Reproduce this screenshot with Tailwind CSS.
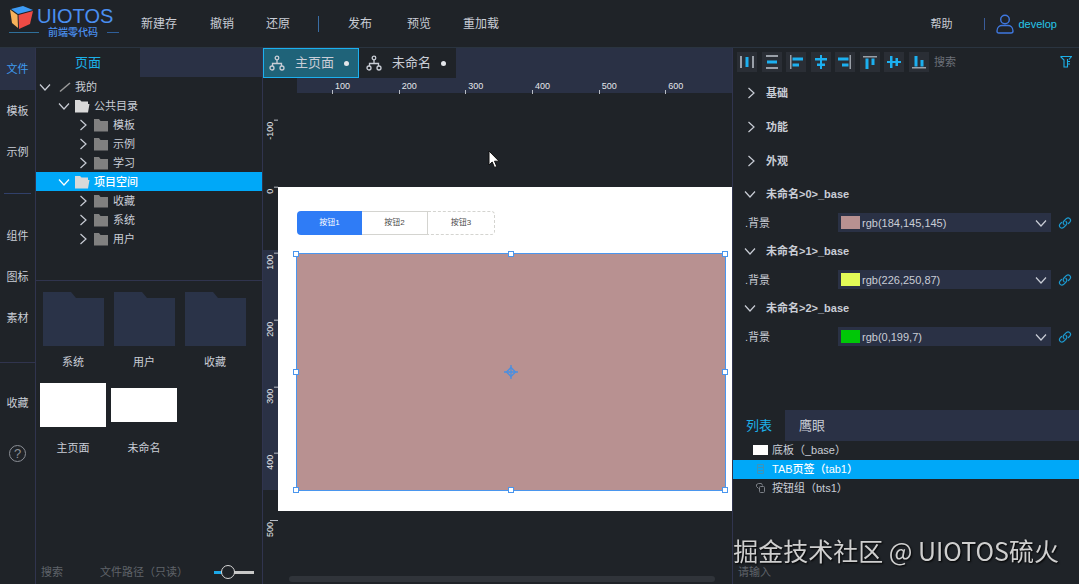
<!DOCTYPE html>
<html lang="zh-CN">
<head>
  <meta charset="UTF-8">
  <meta name="viewport" content="width=device-width, initial-scale=1.0">
  <title>UIOTOS 前端零代码</title>
  <script src="https://cdn.jsdelivr.net/npm/@tailwindcss/browser@4"></script>
</head>
<body class="bg-[#1f2328] text-[#c9cdd6] text-[11px] leading-4 font-['Liberation_Sans','Noto_Sans_CJK_SC',sans-serif] h-screen overflow-hidden flex flex-col">

  <!-- Icons -->
  <svg class="hidden">
    <symbol id="right" viewBox="0 0 12 12"><path d="M3.5 1 9 6 3.5 11" fill="none" stroke="currentColor" stroke-width="1.2"/></symbol>
    <symbol id="down" viewBox="0 0 12 12"><path d="M1 3.5 6 9 11 3.5" fill="none" stroke="currentColor" stroke-width="1.2"/></symbol>
    <symbol id="folder" viewBox="0 0 16 14"><path d="M1 1h5l1.5 2H15v10.500H1z" fill="currentColor"/></symbol>
    <symbol id="folder-open" viewBox="0 0 16 14"><path d="M1 1h5l1.500 1.500H14V5h1.500L14 13.500H1z" fill="currentColor"/></symbol>
    <symbol id="big-folder" viewBox="0 0 61 54"><path d="M0 0h28l5 6h28v48H0z" fill="currentColor"/></symbol>
    <symbol id="tree" viewBox="0 0 16 16"><g fill="none" stroke="currentColor" stroke-width="1.300"><circle cx="8" cy="3" r="1.800"/><path d="M8 5v3M3.500 11V8.500h9V11"/><circle cx="3" cy="13" r="2"/><circle cx="13" cy="13" r="2"/></g></symbol>
    <symbol id="link" viewBox="0 0 14 14"><g fill="none" stroke="currentColor" stroke-width="1.200" stroke-linecap="round"><path d="M6 8.500a2.500 2.500 0 0 1 0-3.500l2.500-2.600a2.500 2.500 0 0 1 3.500 3.500L10.500 7.500"/><path d="M8 5.500a2.500 2.500 0 0 1 0 3.500l-2.500 2.600A2.500 2.500 0 0 1 2 8.100L3.500 6.500"/></g></symbol>
  </svg>

  <!-- Header -->
  <header class="h-12 shrink-0 flex items-center border-b border-[#2a3440]">
    <div class="w-[141px] pl-[9px] pr-[22px] pb-1 text-[#4a8ff0]">
      <div class="flex h-[22px] items-center gap-1">
        <svg class="size-6 mt-1" viewBox="0 0 24 24">
          <path d="M2 3 14 0l10 4-15 4z" fill="#3d9bf5"/>
          <path d="M1 3.500 8.500 9 9 22 3 17z" fill="#f7b25a"/>
          <path d="M9.500 9 24 5l-3 13-11 5z" fill="#ee4b45"/>
        </svg>
        <span class="text-[20px] leading-[22px]">UIOTOS</span>
      </div>
      <div class="flex h-3 items-center justify-between">
        <span class="w-[30px] border-t border-[#2f6f9a]"></span>
        <span class="text-[10px] leading-3 font-medium">前端零代码</span>
        <span class="w-3 border-t border-[#2f5f9a]"></span>
      </div>
    </div>
    <nav class="flex items-center text-xs">
      <button class="w-[69px] text-left">新建存</button>
      <button class="w-14 text-left">撤销</button>
      <button class="w-[52px] text-left">还原</button>
      <span class="w-[30px] h-4 border-l border-[#3a6ea5]"></span>
      <button class="w-[59px] text-left">发布</button>
      <button class="w-14 text-left">预览</button>
      <button class="text-left">重加载</button>
    </nav>
    <div class="ml-auto flex items-center pr-[22px]">
      <button class="mr-8">帮助</button>
      <span class="h-3 w-3 border-l border-[#3a5c9a]"></span>
      <button class="flex items-center gap-1 text-[#26c6e8]">
        <svg class="w-[18px] h-5 text-[#3f78e0]" viewBox="0 0 18 20" fill="none" stroke="currentColor" stroke-width="1.400"><circle cx="9" cy="5.500" r="4.300"/><path d="M1 17c0-4 3-5.500 5-5.500h6c2 0 5 1.500 5 5.500 0 1.500-.5 2-2 2H3c-1.500 0-2-.5-2-2z"/></svg>
        develop
      </button>
    </div>
  </header>

  <div class="flex flex-1 min-h-0">
    <!-- Side nav -->
    <nav class="w-9 shrink-0 flex flex-col border-r border-[#30344e]">
      <button class="h-[42px] bg-[#2a3145] text-[#3f9cf0]">文件</button>
      <button class="h-[41px]">模板</button>
      <button class="h-[41px]">示例</button>
      <hr class="my-[21px] mx-1 border-[#31406a]">
      <button class="h-[41px]">组件</button>
      <button class="h-[41px]">图标</button>
      <button class="h-[41px]">素材</button>
      <hr class="mt-6 mb-[19px] border-[#30344e]">
      <button class="h-[41px]">收藏</button>
      <button class="mt-[22px] mx-auto size-[17px] rounded-full border border-[#8b8f96] text-[#8b8f96] text-[13px] leading-[15px]">?</button>
    </nav>

    <!-- Page explorer -->
    <aside class="w-[227px] shrink-0 flex flex-col border-r border-[#30344e]">
      <div class="flex h-[29px]">
        <button class="w-[104px] text-[13px] text-[#1cb0e8]">页面</button>
        <div class="flex-1 bg-[#2a3145]"></div>
      </div>
      <ul class="h-[204px] border-b border-[#30344e] [&>li]:h-[19px] [&>li]:flex [&>li]:items-center">
        <li class="pl-[3px]"><svg class="size-3 mr-2"><use href="#down"/></svg><svg class="w-3 h-3 mr-1 text-[#9a9a9a]" viewBox="0 0 12 12"><path d="M1 10.500 11 2" stroke="currentColor" stroke-width="1.500"/></svg>我的</li>
        <li class="pl-[22px]"><svg class="size-3 mr-1"><use href="#down"/></svg><svg class="w-4 h-[14px] mr-1 text-[#d9d9d9]"><use href="#folder-open"/></svg>公共目录</li>
        <li class="pl-[41px]"><svg class="size-3 mr-1"><use href="#right"/></svg><svg class="w-4 h-[14px] mr-1 text-[#808080]"><use href="#folder"/></svg>模板</li>
        <li class="pl-[41px]"><svg class="size-3 mr-1"><use href="#right"/></svg><svg class="w-4 h-[14px] mr-1 text-[#808080]"><use href="#folder"/></svg>示例</li>
        <li class="pl-[41px]"><svg class="size-3 mr-1"><use href="#right"/></svg><svg class="w-4 h-[14px] mr-1 text-[#808080]"><use href="#folder"/></svg>学习</li>
        <li class="pl-[22px] bg-[#00a8f8] text-white font-medium"><svg class="size-3 mr-1"><use href="#down"/></svg><svg class="w-4 h-[14px] mr-1 text-[#d9d9d9]"><use href="#folder-open"/></svg>项目空间</li>
        <li class="pl-[41px]"><svg class="size-3 mr-1"><use href="#right"/></svg><svg class="w-4 h-[14px] mr-1 text-[#808080]"><use href="#folder"/></svg>收藏</li>
        <li class="pl-[41px]"><svg class="size-3 mr-1"><use href="#right"/></svg><svg class="w-4 h-[14px] mr-1 text-[#808080]"><use href="#folder"/></svg>系统</li>
        <li class="pl-[41px]"><svg class="size-3 mr-1"><use href="#right"/></svg><svg class="w-4 h-[14px] mr-1 text-[#808080]"><use href="#folder"/></svg>用户</li>
      </ul>
      <div class="grid grid-cols-[66px_66px_66px] gap-x-[5px] gap-y-3 pl-1 pt-2 text-center">
        <figure><div class="h-[60px] flex items-center justify-center"><svg class="w-[61px] h-[54px] text-[#2a3348]"><use href="#big-folder"/></svg></div><figcaption class="mt-1 pt-[1px]">系统</figcaption></figure>
        <figure><div class="h-[60px] flex items-center justify-center"><svg class="w-[61px] h-[54px] text-[#2a3348]"><use href="#big-folder"/></svg></div><figcaption class="mt-1 pt-[1px]">用户</figcaption></figure>
        <figure><div class="h-[60px] flex items-center justify-center"><svg class="w-[61px] h-[54px] text-[#2a3348]"><use href="#big-folder"/></svg></div><figcaption class="mt-1 pt-[1px]">收藏</figcaption></figure>
        <figure><div class="h-[46px] flex items-center"><div class="w-full h-11 bg-white"></div></div><figcaption class="mt-3">主页面</figcaption></figure>
        <figure><div class="h-[46px] flex items-center"><div class="w-full h-[34px] bg-white"></div></div><figcaption class="mt-3">未命名</figcaption></figure>
      </div>
      <div class="mt-auto h-6 flex items-center pl-[5px] pr-2">
        <input type="text" aria-label="搜索" placeholder="搜索" class="w-[59px] placeholder:text-[#5f636a] outline-none">
        <input type="text" aria-label="文件路径" placeholder="文件路径（只读）" readonly class="w-[114px] placeholder:text-[#5f636a] outline-none">
        <input type="range" aria-label="缩放" value="28" class="w-10 h-4 appearance-none bg-transparent [&::-webkit-slider-runnable-track]:h-[3px] [&::-webkit-slider-runnable-track]:bg-linear-to-r [&::-webkit-slider-runnable-track]:from-[#1ca8e8] [&::-webkit-slider-runnable-track]:from-25% [&::-webkit-slider-runnable-track]:to-[#c8c8c8] [&::-webkit-slider-runnable-track]:to-25% [&::-webkit-slider-thumb]:appearance-none [&::-webkit-slider-thumb]:size-[14px] [&::-webkit-slider-thumb]:-mt-[6px] [&::-webkit-slider-thumb]:rounded-full [&::-webkit-slider-thumb]:border [&::-webkit-slider-thumb]:border-[#d8d8d8] [&::-webkit-slider-thumb]:bg-[#1f2328]">
      </div>
    </aside>

    <!-- Editor -->
    <main class="flex-1 min-w-0 flex flex-col">
      <div class="h-[30px] shrink-0 flex bg-[#2a3145] text-[13px]">
        <button class="w-24 flex items-center pl-[5px] bg-[#1f6379] border border-[#1cb0f0]"><svg class="size-4 mr-[10px]"><use href="#tree"/></svg>主页面<span class="ml-[10px] size-[5px] rounded-full bg-[#e4e6ea]"></span></button>
        <button class="w-[97px] flex items-center pl-[7px] bg-[#1f2328]"><svg class="size-4 mr-[10px]"><use href="#tree"/></svg>未命名<span class="ml-[10px] size-[5px] rounded-full bg-[#e4e6ea]"></span></button>
      </div>
      <div class="h-[15px] shrink-0 ml-[34px] pl-[35px] bg-[#2a3145] grid grid-cols-6 text-[9px] text-[#e4e6ea] [&>span]:pl-[3px] [&>span]:bg-linear-to-b [&>span]:from-[#b8bcc4] [&>span]:to-[#b8bcc4] [&>span]:bg-[length:1px_4px] [&>span]:bg-[position:left_bottom] [&>span]:bg-no-repeat">
        <span>100</span><span>200</span><span>300</span><span>400</span><span>500</span><span>600</span>
      </div>
      <div class="flex-1 min-h-0 flex">
        <div class="w-[15px] pt-[27px] bg-linear-to-b from-[#2a3145] to-[#2a3145] bg-[length:15px_240px] bg-[position:0_157px] bg-no-repeat">
          <div class="h-[400px] grid grid-rows-6 text-[9px] leading-[14px] text-[#e4e6ea] [&>span]:flex [&>span]:justify-end [&>span]:[writing-mode:vertical-rl] [&>span]:rotate-180 [&>span]:pb-[2px] [&>span]:bg-linear-to-b [&>span]:from-[#b8bcc4] [&>span]:to-[#b8bcc4] [&>span]:bg-[length:4px_1px] [&>span]:bg-[position:left_bottom] [&>span]:bg-no-repeat">
            <span>-100</span><span>0</span><span>100</span><span>200</span><span>300</span><span>400</span>
          </div>
          <div class="h-[30px] w-full flex justify-end text-[9px] leading-[14px] text-[#e4e6ea] [writing-mode:vertical-rl] rotate-180 pb-[2px] bg-linear-to-b from-[#b8bcc4] to-[#b8bcc4] bg-[length:8px_1px] bg-[position:left_bottom] bg-no-repeat">500</div>
        </div>
        <div class="flex-1 relative">
          <!-- Artboard -->
          <div class="absolute left-0 right-0 top-[94px] h-[324px] bg-white">
            <div class="absolute left-[19px] top-6 flex h-6 text-[8px] text-[#4a4a4a]">
              <button class="w-[65px] rounded-l-sm bg-[#2f7cf6] text-white">按钮1</button>
              <button class="w-[66px] border border-l-0 border-[#d4d4d0]">按钮2</button>
              <button class="w-[67px] border border-l-0 border-dashed border-[#d4d4d0] rounded-r-sm">按钮3</button>
            </div>
            <div class="absolute left-[18px] right-[6px] top-[66px] bottom-[20px] bg-[#b89191] border border-[#4a96ee]">
              <i class="absolute -left-[4px] -top-[3px] size-[6px] bg-white border border-[#4a96ee]"></i>
              <i class="absolute left-1/2 -ml-[3px] -top-[3px] size-[6px] bg-white border border-[#4a96ee]"></i>
              <i class="absolute -right-[3px] -top-[3px] size-[6px] bg-white border border-[#4a96ee]"></i>
              <i class="absolute -left-[4px] top-1/2 -mt-[3px] size-[6px] bg-white border border-[#4a96ee]"></i>
              <i class="absolute -right-[3px] top-1/2 -mt-[3px] size-[6px] bg-white border border-[#4a96ee]"></i>
              <i class="absolute -left-[4px] -bottom-[3px] size-[6px] bg-white border border-[#4a96ee]"></i>
              <i class="absolute left-1/2 -ml-[3px] -bottom-[3px] size-[6px] bg-white border border-[#4a96ee]"></i>
              <i class="absolute -right-[3px] -bottom-[3px] size-[6px] bg-white border border-[#4a96ee]"></i>
              <svg class="absolute left-1/2 top-1/2 -ml-[7px] -mt-[7px] size-[14px]" viewBox="0 0 14 14" fill="none" stroke="#4a8fe0" stroke-width="1.300"><path d="M7 0v14M0 7h14"/><path d="M7 2.500 11.500 7 7 11.500 2.500 7z"/></svg>
            </div>
          </div>
          <!-- Cursor -->
          <svg class="absolute left-[210px] top-[57px] w-3 h-[19px]" viewBox="0 0 12 19"><path d="M1 1v14l3.200-3 2.300 5.500 2.300-1L6.500 11.200H11z" fill="#fff" stroke="#111"/></svg>
          <div class="absolute left-[11px] right-[17px] bottom-[2px] h-[6px] rounded-full bg-[#30343a]"></div>
        </div>
      </div>
    </main>

    <!-- Properties -->
    <aside class="w-[347px] shrink-0 flex flex-col border-l border-[#30344e]">
      <div class="h-7 flex items-center pl-1 pr-[7px]">
        <div class="w-[192px] flex justify-between [&>button]:size-5 [&>button]:bg-[#2a2e35] [&>button]:p-[3px] [&_svg]:size-[14px]">
          <button aria-label="水平分布"><svg viewBox="0 0 14 14"><path fill="#9aa0a8" d="M0 1h2v12H0zM12 1h2v12h-2z"/><path fill="#1cb0f0" d="M5.500 2h3v10h-3z"/></svg></button>
          <button aria-label="垂直分布"><svg viewBox="0 0 14 14"><path fill="#9aa0a8" d="M1 0h12v2H1zM1 12h12v2H1z"/><path fill="#1cb0f0" d="M2 5.500h10v3H2z"/></svg></button>
          <button aria-label="左对齐"><svg viewBox="0 0 14 14"><path fill="#9aa0a8" d="M1 0h1.500v14H1z"/><path fill="#1cb0f0" d="M3.500 2.500H14v3H3.500zM3.500 8.500H10v3H3.500z"/></svg></button>
          <button aria-label="水平居中"><svg viewBox="0 0 14 14"><path fill="#1cb0f0" d="M6 0h2v14H6zM1 3h12v2.500H1zM3 8.500h8V11H3z"/></svg></button>
          <button aria-label="右对齐"><svg viewBox="0 0 14 14"><path fill="#9aa0a8" d="M11.500 0H13v14h-1.500z"/><path fill="#1cb0f0" d="M0 2.500h10.500v3H0zM4 8.500h6.500v3H4z"/></svg></button>
          <button aria-label="顶对齐"><svg viewBox="0 0 14 14"><path fill="#9aa0a8" d="M0 1h14v1.500H0z"/><path fill="#1cb0f0" d="M2.500 3.500h3V14h-3zM8.500 3.500h3V10h-3z"/></svg></button>
          <button aria-label="垂直居中"><svg viewBox="0 0 14 14"><path fill="#1cb0f0" d="M0 6h14v2H0zM3 1h2.500v12H3zM8.500 3H11v8H8.500z"/></svg></button>
          <button aria-label="底对齐"><svg viewBox="0 0 14 14"><path fill="#9aa0a8" d="M0 12h14v1.500H0z"/><path fill="#1cb0f0" d="M2.500 1h3v10.500h-3zM8.500 5h3v6.500h-3z"/></svg></button>
        </div>
        <input type="text" aria-label="搜索属性" placeholder="搜索" class="flex-1 min-w-0 pl-[5px] placeholder:text-[#6c7078] outline-none">
        <button aria-label="筛选"><svg class="size-3 text-[#1cb0e8]" viewBox="0 0 12 12" fill="none" stroke="currentColor" stroke-width="1.100"><path d="M.5.500h11L9 3.500M.5.500 4 4v7h4M7.500 3v8M7.500 5.500H10M7.500 8H10"/></svg></button>
      </div>

      <div class="font-bold [&>button]:h-[34px] [&>button]:w-full [&>button]:flex [&>button]:items-center [&>button]:pl-3">
        <button><svg class="size-3 mr-[9px]"><use href="#right"/></svg>基础</button>
        <button><svg class="size-3 mr-[9px]"><use href="#right"/></svg>功能</button>
        <button><svg class="size-3 mr-[9px]"><use href="#right"/></svg>外观</button>
      </div>

      <div class="pt-[2px]">
        <button class="h-7 w-full flex items-center pl-[11px] font-bold"><svg class="size-3 mr-[10px]"><use href="#down"/></svg>未命名&gt;0&gt;_base</button>
        <div class="h-[29px] flex items-center pl-3">
          <label for="bg0" class="w-[93px]">.背景</label>
          <div class="flex-1 h-[19px] flex items-center bg-[#2a3145] pl-[3px] pr-1">
            <span class="w-[19px] h-[13px] bg-[#b89191]"></span>
            <select id="bg0" class="appearance-none flex-1 pl-[2px] outline-none"><option>rgb(184,145,145)</option></select>
            <svg class="size-3"><use href="#down"/></svg>
          </div>
          <a href="#bg0" aria-label="绑定" class="w-7 flex justify-center text-[#1c9ad0]"><svg class="size-[14px]"><use href="#link"/></svg></a>
        </div>
        <button class="h-7 w-full flex items-center pl-[11px] font-bold"><svg class="size-3 mr-[10px]"><use href="#down"/></svg>未命名&gt;1&gt;_base</button>
        <div class="h-[29px] flex items-center pl-3">
          <label for="bg1" class="w-[93px]">.背景</label>
          <div class="flex-1 h-[19px] flex items-center bg-[#2a3145] pl-[3px] pr-1">
            <span class="w-[19px] h-[13px] bg-[#e2fa57]"></span>
            <select id="bg1" class="appearance-none flex-1 pl-[2px] outline-none"><option>rgb(226,250,87)</option></select>
            <svg class="size-3"><use href="#down"/></svg>
          </div>
          <a href="#bg1" aria-label="绑定" class="w-7 flex justify-center text-[#1c9ad0]"><svg class="size-[14px]"><use href="#link"/></svg></a>
        </div>
        <button class="h-7 w-full flex items-center pl-[11px] font-bold"><svg class="size-3 mr-[10px]"><use href="#down"/></svg>未命名&gt;2&gt;_base</button>
        <div class="h-[29px] flex items-center pl-3">
          <label for="bg2" class="w-[93px]">.背景</label>
          <div class="flex-1 h-[19px] flex items-center bg-[#2a3145] pl-[3px] pr-1">
            <span class="w-[19px] h-[13px] bg-[#00c707]"></span>
            <select id="bg2" class="appearance-none flex-1 pl-[2px] outline-none"><option>rgb(0,199,7)</option></select>
            <svg class="size-3"><use href="#down"/></svg>
          </div>
          <a href="#bg2" aria-label="绑定" class="w-7 flex justify-center text-[#1c9ad0]"><svg class="size-[14px]"><use href="#link"/></svg></a>
        </div>
      </div>

      <!-- Layer list -->
      <div class="mt-auto h-[174px] flex flex-col">
        <div class="h-[31px] flex bg-[#2a3145] text-[13px]">
          <button class="w-[52px] bg-[#1f2328] text-[#1cb0e8]">列表</button>
          <button class="w-[54px]">鹰眼</button>
        </div>
        <ul class="[&>li]:h-[19px] [&>li]:flex [&>li]:items-center [&>li]:pl-5 [&>li]:pb-[2px]">
          <li><span class="w-[15px] h-[10px] mr-1 bg-white"></span>底板（_base）</li>
          <li class="bg-[#00a8f8] text-white font-medium"><svg class="w-[15px] h-3 mr-1" viewBox="0 0 15 12" fill="none" stroke="#3f93b8"><path d="M4.500 1.500h6v9h-6zM4.500 4.500h6M4.500 7.500h6"/></svg>TAB页签（tab1）</li>
          <li><svg class="w-[15px] h-3 mr-1" viewBox="0 0 15 12" fill="none" stroke="#7c8087"><path d="M5.500 6.500 3.500 4.500v-2l2-1h3l1 2"/><rect x="6.500" y="4.500" width="5" height="6" rx="1"/></svg>按钮组（bts1）</li>
        </ul>
        <input type="text" aria-label="请输入" placeholder="请输入" class="mt-auto h-6 pl-[5px] placeholder:text-[#5f636a] outline-none">
      </div>
    </aside>
  </div>

  <!-- Watermark -->
  <div class="fixed right-5 bottom-4 text-[25px] leading-9 whitespace-nowrap text-[#cfcfcf] font-['Noto_Sans_CJK_SC',sans-serif] text-shadow-[1px_1px_2px_#000]">掘金技术社区 @ UIOTOS硫火</div>
</body>
</html>
